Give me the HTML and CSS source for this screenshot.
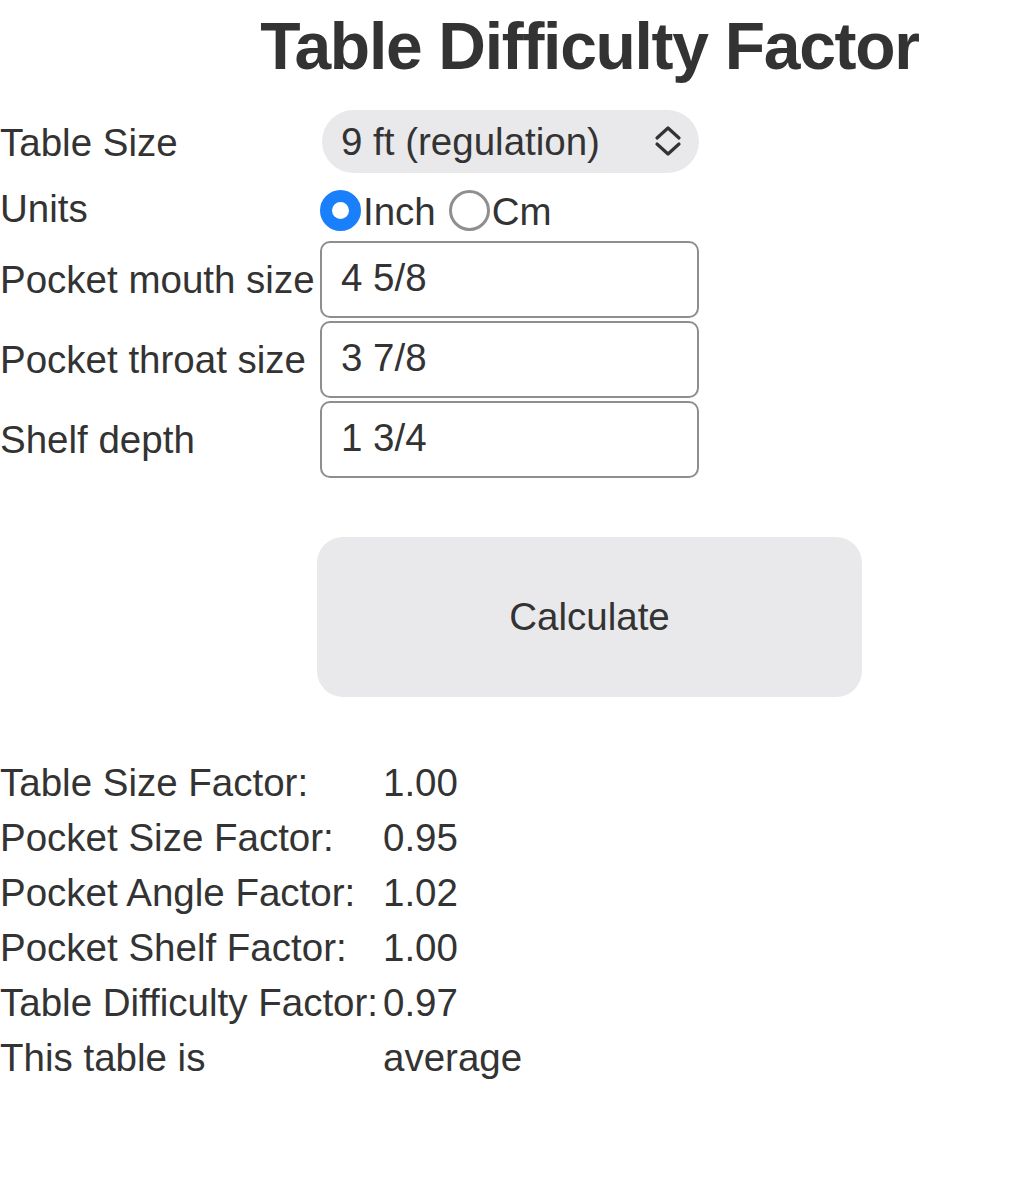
FILE: index.html
```html
<!DOCTYPE html>
<html lang="en">
<head>
<meta charset="utf-8">
<title>Table Difficulty Factor</title>
<link rel="stylesheet" href="styles.css">
</head>
<body>
  <h1 class="title">Table Difficulty Factor</h1>
  <form class="form">
    <div class="row row-select">
      <label class="label" for="size">Table Size</label>
      <div class="select-wrap">
        <select id="size" class="select">
          <option>9 ft (regulation)</option>
          <option>8 ft</option>
          <option>7 ft (bar box)</option>
        </select>
        <svg class="chevron" width="28" height="32" viewBox="0 0 28 32" aria-hidden="true">
          <path d="M3 13 L14 3 L25 13" fill="none" stroke="#333" stroke-width="3.2" stroke-linecap="round" stroke-linejoin="round"/>
          <path d="M3 19 L14 29 L25 19" fill="none" stroke="#333" stroke-width="3.2" stroke-linecap="round" stroke-linejoin="round"/>
        </svg>
      </div>
    </div>
    <div class="row row-units">
      <span class="label">Units</span>
      <div class="radios">
        <label class="radio-label"><input type="radio" name="units" class="radio" checked><span class="radio-text">Inch</span></label>
        <label class="radio-label"><input type="radio" name="units" class="radio"><span class="radio-text">Cm</span></label>
      </div>
    </div>
    <div class="row row-input">
      <label class="label" for="mouth">Pocket mouth size</label>
      <input id="mouth" class="input" type="text" value="4 5/8">
    </div>
    <div class="row row-input">
      <label class="label" for="throat">Pocket throat size</label>
      <input id="throat" class="input" type="text" value="3 7/8">
    </div>
    <div class="row row-input">
      <label class="label" for="shelf">Shelf depth</label>
      <input id="shelf" class="input" type="text" value="1 3/4">
    </div>
    <button type="button" class="button">Calculate</button>
  </form>
  <div class="results">
    <div class="res-label">Table Size Factor:</div><div class="res-value">1.00</div>
    <div class="res-label">Pocket Size Factor:</div><div class="res-value">0.95</div>
    <div class="res-label">Pocket Angle Factor:</div><div class="res-value">1.02</div>
    <div class="res-label">Pocket Shelf Factor:</div><div class="res-value">1.00</div>
    <div class="res-label">Table Difficulty Factor:</div><div class="res-value">0.97</div>
    <div class="res-label">This table is</div><div class="res-value">average</div>
  </div>
</body>
</html>
```

FILE: styles.css
```css
* {
  box-sizing: border-box;
}

body {
  margin: 0;
  background: #ffffff;
  color: #333333;
  font-family: "Liberation Sans", Arial, Helvetica, sans-serif;
  font-size: 38.5px;
}

.title {
  margin: 8px 0 0;
  padding-left: 165px;
  text-align: center;
  font-size: 66px;
  line-height: 76px;
  font-weight: 700;
  letter-spacing: -1.3px;
  color: #333333;
}

.form {
  margin-top: 26px;
  display: flex;
  flex-direction: column;
}

.row {
  display: flex;
  align-items: center;
}

.label {
  flex: none;
  width: 320px;
  white-space: nowrap;
}

.row-select {
  height: 63px;
}

.row-select .label {
  padding-top: 3px;
}

.select-wrap {
  position: relative;
  margin-left: 2px;
  width: 377px;
  height: 63px;
}

.select {
  appearance: none;
  -webkit-appearance: none;
  width: 100%;
  height: 100%;
  border: none;
  border-radius: 32px;
  background: #e9e9eb;
  color: #333333;
  font-family: inherit;
  font-size: 38.5px;
  padding: 0 60px 0 19px;
  margin: 0;
  outline: none;
}

.chevron {
  position: absolute;
  right: 17px;
  top: 15px;
  pointer-events: none;
}

.row-units {
  height: 68px;
}

.row-units .label {
  padding-top: 4px;
}

.radios {
  display: flex;
  align-items: center;
  gap: 13px;
  padding-top: 6px;
}

.radio-label {
  display: flex;
  align-items: center;
  gap: 2px;
}

.radio-text {
  padding-top: 4px;
}

.radio {
  appearance: none;
  -webkit-appearance: none;
  margin: 0;
  width: 41px;
  height: 41px;
  border-radius: 50%;
  border: 3px solid #8f8f8f;
  background: #ffffff;
}

.radio:checked {
  border: 12px solid #1a7ffa;
}

.row-input + .row-input {
  margin-top: 3px;
}

.input {
  width: 379px;
  height: 77px;
  margin: 0;
  border: 2px solid #8e8e8e;
  border-radius: 10px;
  padding: 0 19px 4px;
  font-family: inherit;
  font-size: 38.5px;
  color: #333333;
  background: #ffffff;
  outline: none;
}

.button {
  margin: 59px 0 0 317px;
  width: 545px;
  height: 160px;
  border: none;
  border-radius: 26px;
  background: #e9e9eb;
  color: #333333;
  font-family: inherit;
  font-size: 38.5px;
}

.results {
  margin-top: 58px;
  display: grid;
  grid-template-columns: 383px auto;
  line-height: 55px;
}

.res-label {
  white-space: nowrap;
}
```
